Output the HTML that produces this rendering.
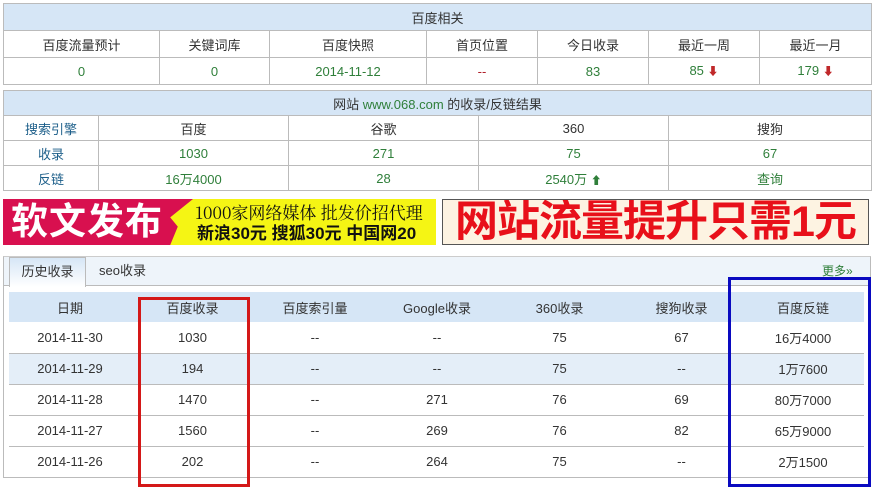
<!DOCTYPE html>
<html><head><meta charset="utf-8"><style>
*{margin:0;padding:0;box-sizing:border-box}
body{width:876px;height:486px;background:#fff;font-family:"Liberation Sans","Noto Sans CJK SC",sans-serif;font-size:13px;color:#333;position:relative;overflow:hidden}
table{border-collapse:collapse;position:absolute;table-layout:fixed}
td{border:1px solid #bbb;text-align:center;padding:0}
.h{background:#d6e6f6}
.g{color:#2f7f3a}
.b{color:#1d5f8a}
.r{color:#b0202a}
.ar{color:#c0282a;font-size:11px}
.au{color:#2f7f3a;font-size:11px}
.abs{position:absolute}
</style></head><body>
<table style="left:3px;top:3px;width:868px">
<colgroup><col style="width:156px"><col style="width:110px"><col style="width:157px"><col style="width:111px"><col style="width:111px"><col style="width:111px"><col style="width:112px"></colgroup>
<tr style="height:27px"><td class="h" colspan="7">百度相关</td></tr>
<tr style="height:27px"><td>百度流量预计</td><td>关键词库</td><td>百度快照</td><td>首页位置</td><td>今日收录</td><td>最近一周</td><td>最近一月</td></tr>
<tr style="height:27px"><td class="g">0</td><td class="g">0</td><td class="g">2014-11-12</td><td class="r">--</td><td class="g">83</td><td class="g">85 <span class="ar">⬇</span></td><td class="g">179 <span class="ar">⬇</span></td></tr>
</table>
<table style="left:3px;top:90px;width:868px">
<colgroup><col style="width:95px"><col style="width:190px"><col style="width:190px"><col style="width:190px"><col style="width:203px"></colgroup>
<tr style="height:25px"><td class="h" colspan="5">网站 <span class="g">www.068.com</span> 的收录/反链结果</td></tr>
<tr style="height:25px"><td class="b">搜索引擎</td><td>百度</td><td>谷歌</td><td>360</td><td>搜狗</td></tr>
<tr style="height:25px"><td class="b">收录</td><td class="g">1030</td><td class="g">271</td><td class="g">75</td><td class="g">67</td></tr>
<tr style="height:25px"><td class="b">反链</td><td class="g">16万4000</td><td class="g">28</td><td class="g">2540万 <span class="au">⬆</span></td><td class="g">查询</td></tr>
</table>
<div class="abs" style="left:3px;top:199px;width:433px;height:46px;background:#f5f514;overflow:hidden">
<div class="abs" style="left:0;top:0;width:190px;height:46px;background:#d8104f;clip-path:polygon(0 0,100% 0,88% 40%,92% 60%,88% 100%,0 100%)"></div>
<div class="abs" style="left:8px;top:2px;color:#fff;font-size:37px;font-weight:bold;line-height:42px;letter-spacing:1px">软文发布</div>
<div class="abs" style="left:192px;top:2px;font-size:17px;line-height:21px;color:#111;font-family:'Noto Serif CJK SC',serif;white-space:nowrap">1000家网络媒体 批发价招代理</div>
<div class="abs" style="left:194px;top:24px;font-size:17px;line-height:21px;color:#111;font-weight:bold;white-space:nowrap">新浪30元 搜狐30元 中国网20</div>
</div>
<div class="abs" style="left:442px;top:199px;width:427px;height:46px;background:#fdf3e2;border:1px solid #555;color:#e8101a;font-size:43px;font-weight:bold;line-height:44px;text-align:center;white-space:nowrap;letter-spacing:-1px;overflow:hidden">网站流量提升只需1元</div>
<div class="abs" style="left:3px;top:256px;width:868px;height:222px;border:1px solid #bbb;border-top:1px solid #ccc"></div>
<div class="abs" style="left:4px;top:257px;width:866px;height:29px;background:#eef4fa;border-bottom:1px solid #bbb"></div>
<div class="abs" style="left:9px;top:257px;width:77px;height:30px;background:linear-gradient(#d6e6f6,#fff);border:1px solid #bbb;border-bottom:none;text-align:center;line-height:28px">历史收录</div>
<div class="abs" style="left:99px;top:257px;line-height:28px">seo收录</div>
<div class="abs g" style="left:822px;top:262px;font-size:12px">更多»</div>
<table style="left:9px;top:292px;width:855px">
<colgroup><col style="width:122px"><col style="width:123px"><col style="width:122px"><col style="width:122px"><col style="width:123px"><col style="width:121px"><col style="width:122px"></colgroup>
<tr style="height:30px;background:#d6e6f6"><td style="border:none">日期</td><td style="border:none">百度收录</td><td style="border:none">百度索引量</td><td style="border:none">Google收录</td><td style="border:none">360收录</td><td style="border:none">搜狗收录</td><td style="border:none">百度反链</td></tr>
<tr style="height:31px"><td style="border-width:0 0 1px">2014-11-30</td><td style="border-width:0 0 1px">1030</td><td style="border-width:0 0 1px">--</td><td style="border-width:0 0 1px">--</td><td style="border-width:0 0 1px">75</td><td style="border-width:0 0 1px">67</td><td style="border-width:0 0 1px">16万4000</td></tr>
<tr style="height:31px;background:#e4eef8"><td style="border-width:0 0 1px">2014-11-29</td><td style="border-width:0 0 1px">194</td><td style="border-width:0 0 1px">--</td><td style="border-width:0 0 1px">--</td><td style="border-width:0 0 1px">75</td><td style="border-width:0 0 1px">--</td><td style="border-width:0 0 1px">1万7600</td></tr>
<tr style="height:31px"><td style="border-width:0 0 1px">2014-11-28</td><td style="border-width:0 0 1px">1470</td><td style="border-width:0 0 1px">--</td><td style="border-width:0 0 1px">271</td><td style="border-width:0 0 1px">76</td><td style="border-width:0 0 1px">69</td><td style="border-width:0 0 1px">80万7000</td></tr>
<tr style="height:31px"><td style="border-width:0 0 1px">2014-11-27</td><td style="border-width:0 0 1px">1560</td><td style="border-width:0 0 1px">--</td><td style="border-width:0 0 1px">269</td><td style="border-width:0 0 1px">76</td><td style="border-width:0 0 1px">82</td><td style="border-width:0 0 1px">65万9000</td></tr>
<tr style="height:31px"><td style="border-width:0 0 1px">2014-11-26</td><td style="border-width:0 0 1px">202</td><td style="border-width:0 0 1px">--</td><td style="border-width:0 0 1px">264</td><td style="border-width:0 0 1px">75</td><td style="border-width:0 0 1px">--</td><td style="border-width:0 0 1px">2万1500</td></tr>
</table>
<div class="abs" style="left:138px;top:297px;width:112px;height:190px;border:3px solid #d41818"></div>
<div class="abs" style="left:728px;top:277px;width:143px;height:210px;border:3px solid #0a0ac0"></div>
</body></html>
